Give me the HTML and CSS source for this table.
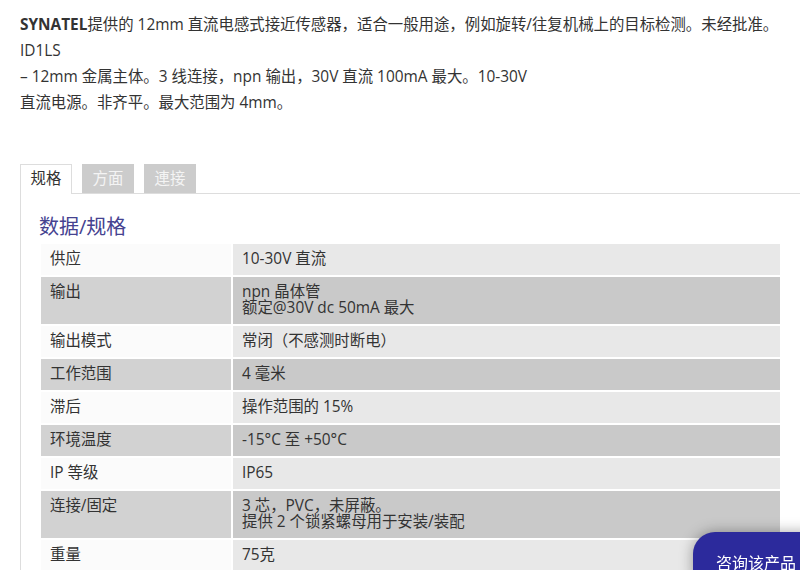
FILE: index.html
```html
<!DOCTYPE html>
<html lang="zh">
<head>
<meta charset="utf-8">
<link rel="stylesheet" href="styles.css">
</head>
<body>
<div class="page">
  <p class="intro"><b>SYNATEL</b>提供的 12mm 直流电感式接近传感器，适合一般用途，例如旋转/往复机械上的目标检测。未经批准。<br>ID1LS<br>– 12mm 金属主体。3 线连接，npn 输出，30V 直流 100mA 最大。10-30V<br>直流电源。非齐平。最大范围为 4mm。</p>

  <ul class="tabs">
    <li class="tab active">规格</li>
    <li class="tab">方面</li>
    <li class="tab">連接</li>
  </ul>
  <div class="panel">
    <h2 class="title">数据/规格</h2>
    <table class="spec">
      <tr class="odd"><td class="k">供应</td><td class="v">10-30V 直流</td></tr>
      <tr class="even"><td class="k">输出</td><td class="v">npn 晶体管<br>额定@30V dc 50mA 最大</td></tr>
      <tr class="odd"><td class="k">输出模式</td><td class="v">常闭（不感测时断电）</td></tr>
      <tr class="even"><td class="k">工作范围</td><td class="v">4 毫米</td></tr>
      <tr class="odd"><td class="k">滞后</td><td class="v">操作范围的 15%</td></tr>
      <tr class="even"><td class="k">环境温度</td><td class="v">-15°C 至 +50°C</td></tr>
      <tr class="odd"><td class="k">IP 等级</td><td class="v">IP65</td></tr>
      <tr class="even"><td class="k">连接/固定</td><td class="v">3 芯，PVC，未屏蔽。<br>提供 2 个锁紧螺母用于安装/装配</td></tr>
      <tr class="odd"><td class="k">重量</td><td class="v">75克</td></tr>
    </table>
  </div>
</div>
<div class="ask">咨询该产品</div>
</body>
</html>
```
FILE: styles.css
```css
html, body {
  margin: 0;
  padding: 0;
  background: #fff;
}
body {
  font-family: "Open Sans", "Noto Sans CJK SC", sans-serif;
  font-size: 15.4px;
  color: #333;
  overflow: hidden;
}
.page {
  padding: 12px 0 0 20px;
}
.intro {
  margin: 0;
  line-height: 26px;
  white-space: nowrap;
}
.intro b {
  font-weight: 700;
}
.tabs {
  list-style: none;
  margin: 48px 0 0 0;
  padding: 0;
  display: flex;
  gap: 10px;
  height: 29px;
}
.tab {
  width: 52px;
  height: 29px;
  box-sizing: border-box;
  background: #cccccc;
  color: #f4f4f4;
  text-align: center;
  line-height: 29px;
  font-size: 15.4px;
}
.tab.active {
  background: #fff;
  color: #333;
  border: 1px solid #dddddd;
  border-bottom: none;
  height: 30px;
  line-height: 28px;
  position: relative;
  z-index: 1;
}
.panel {
  border-top: 1px solid #dddddd;
  border-left: 1px solid #dddddd;
  padding: 19px 18px 0 18px;
}
.title {
  margin: 0;
  font-size: 20px;
  font-weight: 400;
  line-height: 28px;
  color: #454290;
}
.spec {
  margin-top: 1px;
  width: 100%;
  border-collapse: separate;
  border-spacing: 2px;
}
.spec td {
  padding: 7px 9px 8px 9px;
  line-height: 16px;
  vertical-align: top;
}
.spec .k {
  width: 172px;
}
.odd .k { background: #fbfbfb; }
.odd .v { background: #e8e8e8; }
.even .k { background: #d2d2d2; }
.even .v { background: #c9c9c9; }
.ask {
  position: fixed;
  left: 693px;
  top: 532px;
  width: 140px;
  height: 60px;
  border-radius: 22px;
  background: #2c2a9c;
  color: #fff;
  font-size: 16px;
  padding: 18px 0 0 23px;
  box-sizing: border-box;
  box-shadow: 0 0 14px rgba(0,0,0,0.35);
  white-space: nowrap;
}
```
